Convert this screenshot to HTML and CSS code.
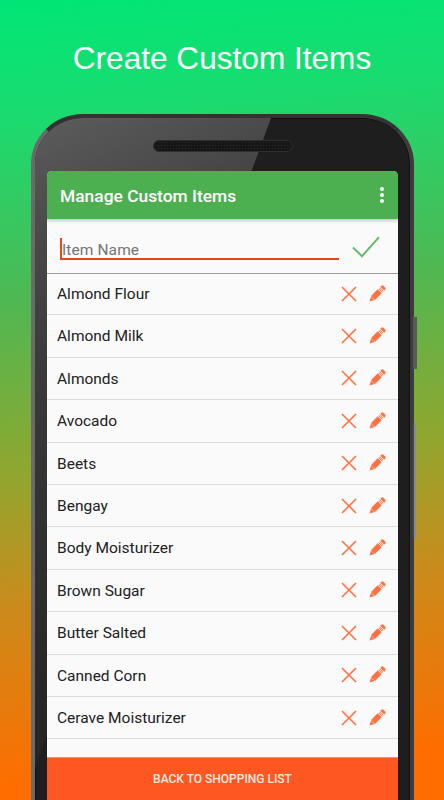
FILE: index.html
```html
<!DOCTYPE html>
<html lang="en">
<head>
<meta charset="utf-8">
<title>Create Custom Items</title>
<link rel="stylesheet" href="styles.css">
</head>
<body>
<main class="page">
  <h1 class="headline">Create Custom Items</h1>
  <div class="phone">
    <div class="bezel">
      <span class="glare"></span>
      <div class="earpiece-row"><span class="earpiece"></span></div>
      <div class="screen">
        <header class="appbar">
          <span class="appbar-title">Manage Custom Items</span>
          <span class="overflow"><i></i><i></i><i></i></span>
        </header>
        <div class="entry">
          <div class="field"><span class="placeholder">Item Name</span></div>
          <svg class="check" viewBox="0 0 28 22"><path d="M1 11.5 10 20.2 27 1.2"/></svg>
        </div>
        <ul class="list">
          <li class="row"><span class="name">Almond Flour</span><svg class="del" viewBox="0 0 16 16"><path d="M1 1 15 15M15 1 1 15"/></svg><svg class="edit" viewBox="0 0 16 16"><use href="#pencil"/></svg></li>
          <li class="row"><span class="name">Almond Milk</span><svg class="del" viewBox="0 0 16 16"><path d="M1 1 15 15M15 1 1 15"/></svg><svg class="edit" viewBox="0 0 16 16"><use href="#pencil"/></svg></li>
          <li class="row"><span class="name">Almonds</span><svg class="del" viewBox="0 0 16 16"><path d="M1 1 15 15M15 1 1 15"/></svg><svg class="edit" viewBox="0 0 16 16"><use href="#pencil"/></svg></li>
          <li class="row"><span class="name">Avocado</span><svg class="del" viewBox="0 0 16 16"><path d="M1 1 15 15M15 1 1 15"/></svg><svg class="edit" viewBox="0 0 16 16"><use href="#pencil"/></svg></li>
          <li class="row"><span class="name">Beets</span><svg class="del" viewBox="0 0 16 16"><path d="M1 1 15 15M15 1 1 15"/></svg><svg class="edit" viewBox="0 0 16 16"><use href="#pencil"/></svg></li>
          <li class="row"><span class="name">Bengay</span><svg class="del" viewBox="0 0 16 16"><path d="M1 1 15 15M15 1 1 15"/></svg><svg class="edit" viewBox="0 0 16 16"><use href="#pencil"/></svg></li>
          <li class="row"><span class="name">Body Moisturizer</span><svg class="del" viewBox="0 0 16 16"><path d="M1 1 15 15M15 1 1 15"/></svg><svg class="edit" viewBox="0 0 16 16"><use href="#pencil"/></svg></li>
          <li class="row"><span class="name">Brown Sugar</span><svg class="del" viewBox="0 0 16 16"><path d="M1 1 15 15M15 1 1 15"/></svg><svg class="edit" viewBox="0 0 16 16"><use href="#pencil"/></svg></li>
          <li class="row"><span class="name">Butter Salted</span><svg class="del" viewBox="0 0 16 16"><path d="M1 1 15 15M15 1 1 15"/></svg><svg class="edit" viewBox="0 0 16 16"><use href="#pencil"/></svg></li>
          <li class="row"><span class="name">Canned Corn</span><svg class="del" viewBox="0 0 16 16"><path d="M1 1 15 15M15 1 1 15"/></svg><svg class="edit" viewBox="0 0 16 16"><use href="#pencil"/></svg></li>
          <li class="row"><span class="name">Cerave Moisturizer</span><svg class="del" viewBox="0 0 16 16"><path d="M1 1 15 15M15 1 1 15"/></svg><svg class="edit" viewBox="0 0 16 16"><use href="#pencil"/></svg></li>
        </ul>
        <div class="back">BACK TO SHOPPING LIST</div>
      </div>
    </div>
    <span class="side-key side-key-power"></span>
    <span class="side-key side-key-volume"></span>
  </div>
</main>
<svg class="defs" width="0" height="0">
  <defs>
    <g id="pencil" transform="rotate(45 8 8)">
      <path fill="#ff7043" d="M5.2 -0.6A1.8 1.8 0 0 1 7 -2.4H9A1.8 1.8 0 0 1 10.8 -0.6V0.6H5.2Z"/>
      <path fill="#ff7043" d="M5.2 4.2H10.8V13.2L8 18.6 5.2 13.2Z"/>
      <path fill="#ffc4b2" d="M5.2 1.2H10.8V3.6H5.2Z"/>
      <path stroke="#ff7043" stroke-width="0.8" fill="none" d="M6.6 1.2V3.6M8 1.2V3.6M9.4 1.2V3.6"/>
      <path stroke="#ffd0c0" stroke-width="0.5" fill="none" d="M5.2 13.2 8 14.4 10.8 13.2"/>
    </g>
  </defs>
</svg>
</body>
</html>
```
FILE: styles.css
```css
* { box-sizing: border-box; }
html, body { margin: 0; height: 800px; overflow: hidden; }
body {
  font-family: Roboto, "Liberation Sans", sans-serif;
  background: linear-gradient(175deg, #00e676 0%, #1adb6f 14%, #4fb853 36%, #8ea72f 56%, #c98c1c 72%, #ff6d00 94%);
}
.page { display: flex; flex-direction: column; align-items: flex-start; height: 800px; }
.headline {
  align-self: center;
  margin: 39px 0 0;
  height: 75px;
  font-family: "Liberation Sans", Arial, sans-serif;
  font-size: 31.6px;
  line-height: 38px;
  font-weight: 400;
  color: #fff;
}
.defs { position: absolute; }
.phone { position: relative; width: 383px; margin-left: 31px; height: 686px; flex: none; }
.bezel {
  position: relative;
  height: 100%;
  padding: 0 12px;
  border-radius: 52px 52px 0 0 / 50px 50px 0 0;
  background: #1e1e1e;
  border-style: solid;
  border-width: 4px 4px 0 4px;
  border-color: #333 #3c3c3c transparent #6a6a6a;
  box-shadow: inset 1px 1px 0 #111, inset -1px 0 0 #111;
  overflow: hidden;
}
.glare {
  position: absolute;
  top: 0;
  left: 0;
  width: 100%;
  height: 100%;
  background: linear-gradient(155deg, #5c5c5c 0%, #474747 16%, #3a3a3a 30%, #262626 70%, #1e1e1e 100%);
  clip-path: polygon(0 0, 236px 0, 130px 290px, 0 650px);
}
.earpiece-row { position: relative; display: flex; justify-content: center; height: 53px; padding-top: 22px; }
.earpiece {
  width: 140px;
  height: 12px;
  border-radius: 6px;
  background-color: #161616;
  background-image: radial-gradient(circle, #2c2c2c 0.6px, transparent 0.8px);
  background-size: 3px 3px;
  border: 1px solid #2e2e2e;
}
.screen {
  position: relative;
  display: flex;
  flex-direction: column;
  height: 629px;
  background: #fafafa;
  border-radius: 5px 5px 0 0;
  overflow: hidden;
}
.appbar {
  position: relative;
  display: flex;
  align-items: center;
  justify-content: space-between;
  flex: none;
  height: 48px;
  padding: 1px 14px 0 13px;
  background: #4caf50;
  box-shadow: 0 2px 3px rgba(0,0,0,.2);
}
.appbar-title { font-size: 17.4px; font-weight: 500; color: #fff; }
.overflow { display: flex; flex-direction: column; gap: 2px; margin-top: -1px; }
.overflow i { display: block; width: 4px; height: 4px; border-radius: 50%; background: #fff; }
.entry {
  display: flex;
  align-items: flex-start;
  flex: none;
  height: 55px;
  padding: 19px 18px 0 13px;
  gap: 13px;
  border-bottom: 1px solid #9e9e9e;
}
.field { flex: 1; height: 22px; border-left: 2px solid #e64a19; border-bottom: 2px solid #e2491a; }
.placeholder { display: block; margin-top: 4px; font-size: 15.5px; line-height: 16px; color: #757575; letter-spacing: .1px; }
.check { width: 28px; height: 22px; margin-top: -2px; fill: none; stroke: #66bb6a; stroke-width: 2; }
.list { list-style: none; margin: 0; padding: 0; flex: 1; }
.row {
  display: flex;
  align-items: center;
  height: 42.4px;
  padding: 0 13px 0 10px;
  border-bottom: 1px solid #dcdcdc;
}
.row:first-child { height: 41.4px; }
.name { flex: 1; font-size: 15.5px; line-height: 20px; color: #212121; padding-top: .6px; }
.del { width: 16px; height: 16px; margin-right: 12px; fill: none; stroke: #ff7043; stroke-width: 1.6; }
.edit { width: 16px; height: 16px; overflow: visible; }
.back {
  flex: none;
  height: 43px;
  border-top: 1px solid #a9a9a9;
  background: #ff5722;
  color: #fde9e2;
  font-size: 12px;
  font-weight: 500;
  line-height: 42px;
  text-align: center;
}
.side-key { position: absolute; background: #5a5a5e; }
.side-key-power { left: 382px; top: 203px; width: 4px; height: 52px; }
.side-key-volume { left: 382px; top: 309px; width: 3px; height: 116px; background: linear-gradient(90deg, #4a4a4a 0 1px, #8a8a8a 1px); }
```
